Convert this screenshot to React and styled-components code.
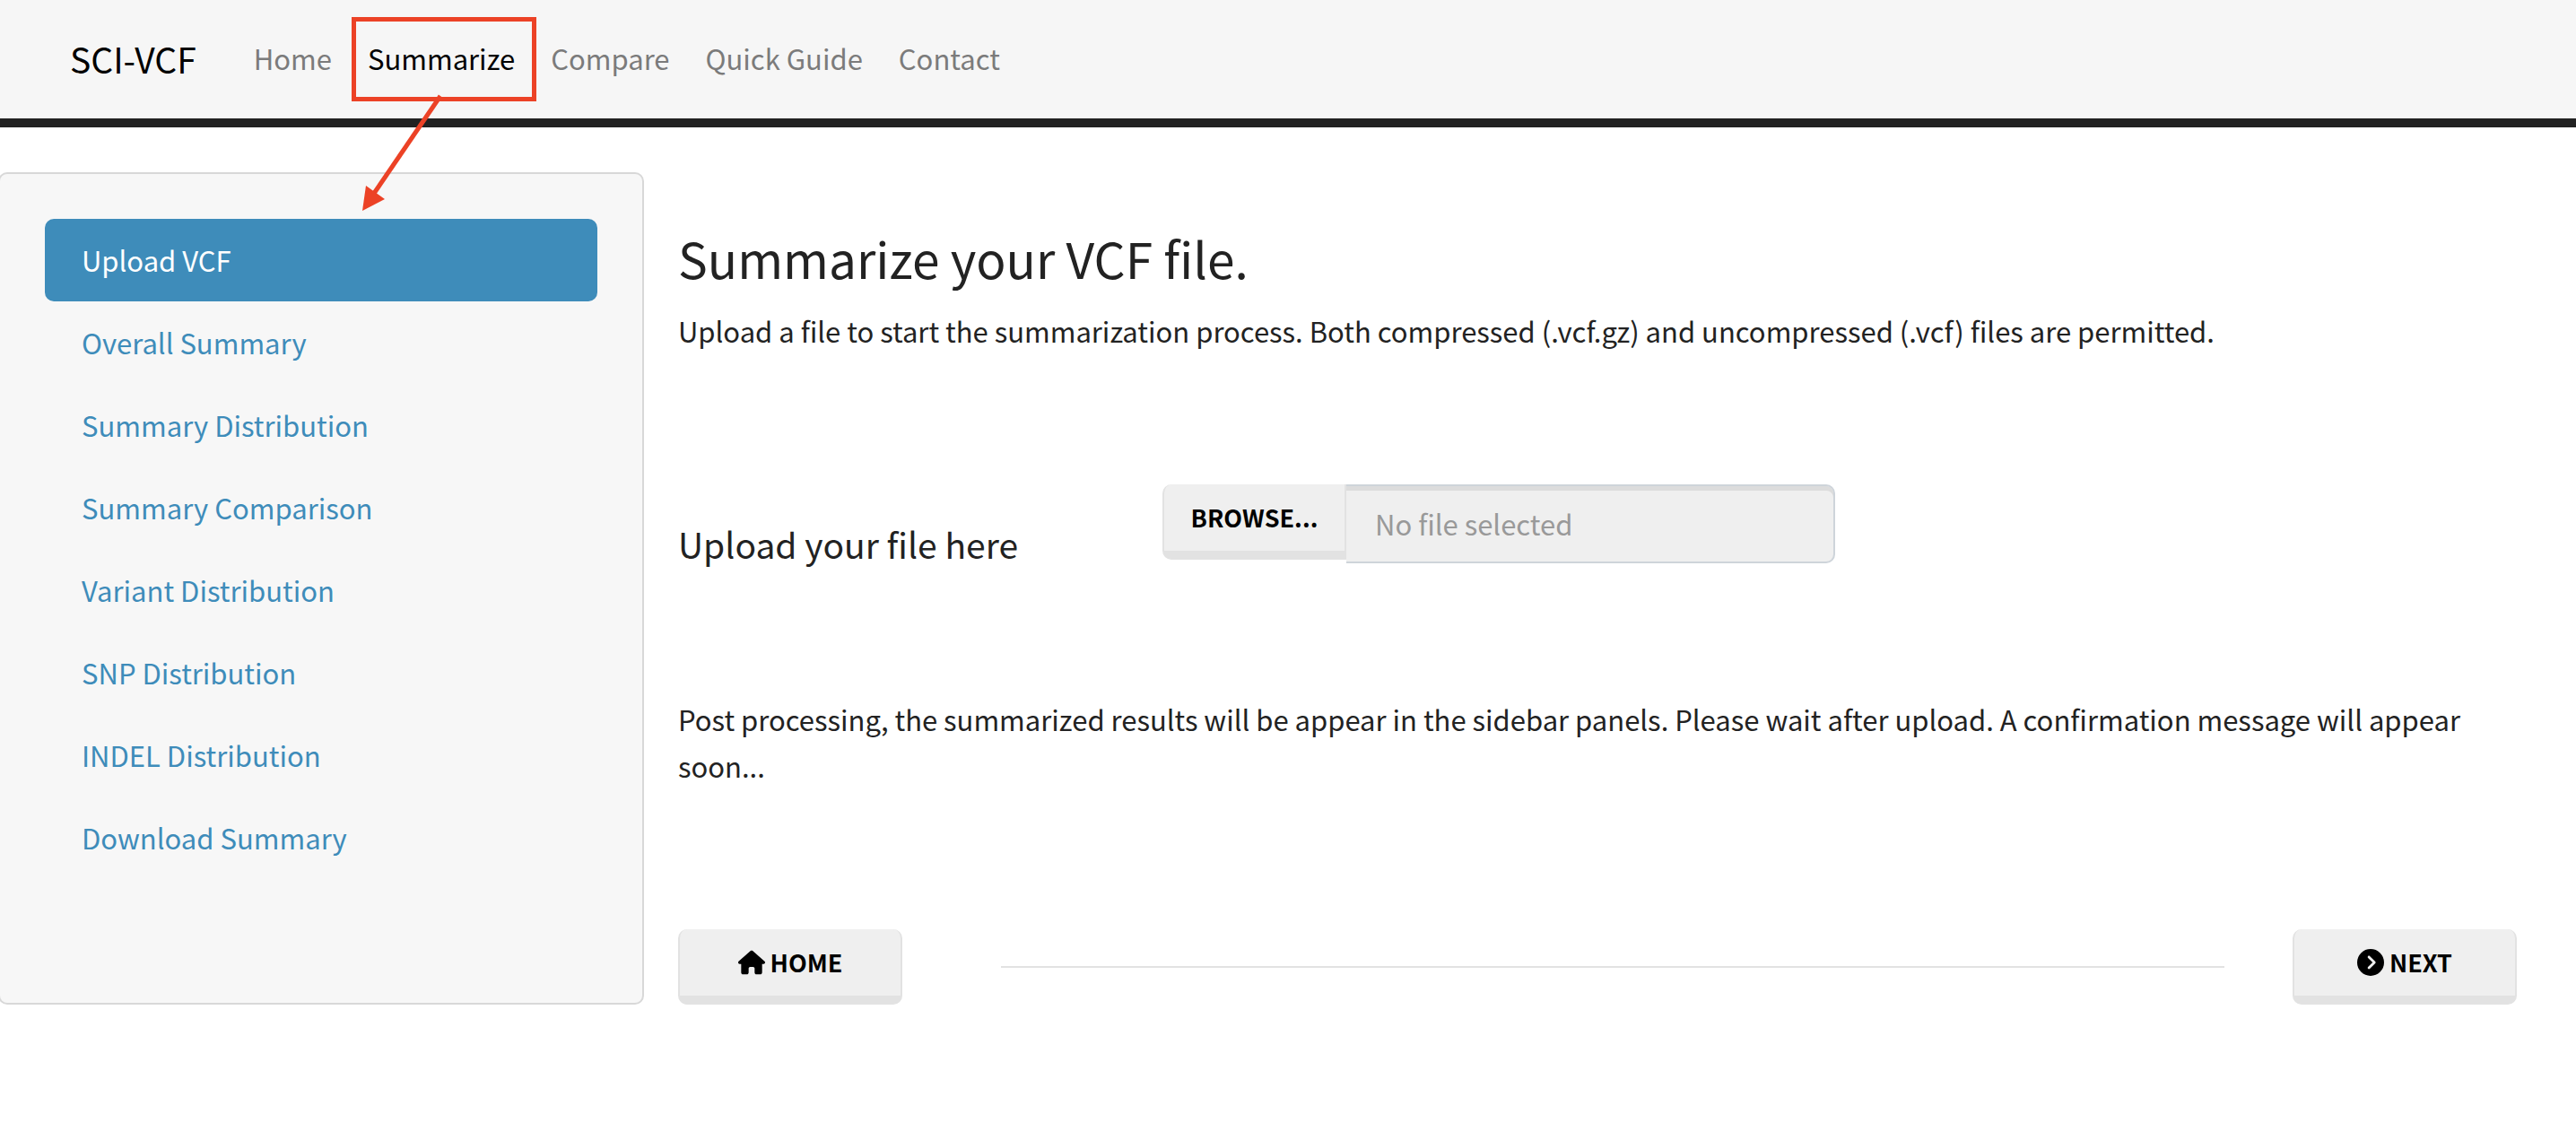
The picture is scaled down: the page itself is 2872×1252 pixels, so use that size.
import React, { useRef, useState } from "react";
import styled, { createGlobalStyle } from "styled-components";
import { FaHouse, FaCircleChevronRight } from "react-icons/fa6";

const GlobalStyle = createGlobalStyle`
  *, *::before, *::after { box-sizing: border-box; }
  body {
    margin: 0;
    background: #fff;
    color: #222;
    font-family: "Noto Sans CJK SC", "Noto Sans", sans-serif;
    font-size: 31px;
    line-height: 52px;
    overflow-x: hidden;
  }
`;

const Header = styled.header`
  display: flex;
  align-items: center;
  gap: 44px;
  min-height: 142px;
  padding: 0 78px 2px;
  background: #f6f6f6;
  border-bottom: 10px solid #222;
`;

const Brand = styled.a`
  color: #000;
  font-size: 39px;
  text-decoration: none;
`;

const NavList = styled.ul`
  display: flex;
  margin: 0;
  padding: 0;
  list-style: none;
`;

const NavItem = styled.li`
  position: relative;
`;

const NavLink = styled.a`
  display: block;
  padding: 20px;
  color: ${(p) => (p.$active ? "#000" : "#7b7b7b")};
  text-decoration: none;
`;

const Highlight = styled.span`
  position: absolute;
  inset: 0 -4px -2px 2px;
  border: 5px solid #ec4226;
  pointer-events: none;
`;

const Arrow = styled.svg`
  position: absolute;
  top: 84px;
  left: 12px;
  z-index: 1;
  pointer-events: none;
`;

const Layout = styled.div`
  display: grid;
  grid-template-columns: minmax(0, 180fr) minmax(0, 521fr);
  column-gap: 38px;
  margin: 50px 32px 50px -2px;
`;

const Sidebar = styled.nav`
  padding: 50px;
  background: #f7f7f7;
  border: 2px solid #d8d8d8;
  border-radius: 10px;
`;

const SideList = styled.ul`
  margin: 0;
  padding: 0;
  list-style: none;
`;

const SideLink = styled.a`
  display: block;
  padding: 20px 41px;
  border-radius: 10px;
  background: ${(p) => (p.$active ? "#3e8cba" : "transparent")};
  color: ${(p) => (p.$active ? "#fff" : "#3e8cba")};
  text-decoration: none;
`;

const Main = styled.main`
  padding-top: 55px;
`;

const Title = styled.h1`
  margin: 0 0 16px;
  font-size: 55px;
  font-weight: 400;
  line-height: 80px;
`;

const Text = styled.p`
  margin: 0;
`;

const Row = styled.div`
  display: grid;
  grid-template-columns: repeat(12, minmax(0, 1fr));
  column-gap: 76px;
  align-items: ${(p) => p.$align || "start"};
`;

const UploadRow = styled(Row)`
  margin: 145px 0 142px;
`;

const FieldLabel = styled.label`
  grid-column: span 3;
  padding-top: 38px;
  font-size: 39px;
  line-height: 56px;
`;

const FileGroup = styled.div`
  grid-column: span 6;
  display: flex;
  align-items: flex-start;
  max-width: 750px;
`;

const Button = styled.button`
  display: inline-flex;
  align-items: center;
  justify-content: center;
  gap: 6px;
  width: ${(p) => (p.$attached ? "205px" : "250px")};
  height: 84px;
  padding: 0;
  flex: none;
  background: #efefef;
  border: solid #e2e2e2;
  border-width: 0 2px 10px;
  border-radius: ${(p) => (p.$attached ? "10px 0 0 10px" : "10px")};
  color: #000;
  font: 700 27px/40px "Noto Sans CJK SC", "Noto Sans", sans-serif;
  text-transform: uppercase;
  cursor: pointer;

  svg {
    font-size: 30px;
  }
`;

const FileName = styled.input`
  flex: 1;
  min-width: 0;
  height: 88px;
  padding: 0 32px 2px;
  background: #efefef;
  border: 2px solid #ced4da;
  border-left: 0;
  border-radius: 0 10px 10px 0;
  box-shadow: inset 0 5px 0 #dcdcdc;
  color: #222;
  font: 400 31px/52px "Noto Sans CJK SC", "Noto Sans", sans-serif;

  &::placeholder {
    color: #999;
    opacity: 1;
  }
`;

const FooterRow = styled(Row)`
  margin-top: 156px;
`;

const Cell = styled.div`
  grid-column: span 2;
  display: flex;
`;

const Rule = styled.hr`
  grid-column: span 8;
  width: 100%;
  margin: 0;
  border: 0;
  border-top: 2px solid #e2e2e2;
`;

const navItems = ["Home", "Summarize", "Compare", "Quick Guide", "Contact"];

const sideItems = [
  "Upload VCF",
  "Overall Summary",
  "Summary Distribution",
  "Summary Comparison",
  "Variant Distribution",
  "SNP Distribution",
  "INDEL Distribution",
  "Download Summary",
];

export default function App() {
  const picker = useRef(null);
  const [fileName, setFileName] = useState("");

  return (
    <>
      <GlobalStyle />
      <Header>
        <Brand href="#">SCI-VCF</Brand>
        <nav>
          <NavList>
            {navItems.map((item) => (
              <NavItem key={item}>
                <NavLink href="#" $active={item === "Summarize"}>
                  {item}
                </NavLink>
                {item === "Summarize" && (
                  <>
                    <Highlight />
                    <Arrow width="96" height="136" viewBox="0 0 96 136" aria-hidden="true">
                      <path d="M89 4 14 114" fill="none" stroke="#ec4226" strokeWidth="5" />
                      <path d="M2 132 6 104 27 119Z" fill="#ec4226" />
                    </Arrow>
                  </>
                )}
              </NavItem>
            ))}
          </NavList>
        </nav>
      </Header>
      <Layout>
        <Sidebar>
          <SideList>
            {sideItems.map((item, i) => (
              <li key={item}>
                <SideLink href="#" $active={i === 0}>
                  {item}
                </SideLink>
              </li>
            ))}
          </SideList>
        </Sidebar>
        <Main>
          <Title>Summarize your VCF file.</Title>
          <Text>
            Upload a file to start the summarization process. Both compressed (.vcf.gz) and
            uncompressed (.vcf) files are permitted.
          </Text>
          <UploadRow>
            <FieldLabel htmlFor="vcf-file">Upload your file here</FieldLabel>
            <FileGroup>
              <Button type="button" $attached onClick={() => picker.current.click()}>
                Browse...
              </Button>
              <FileName
                id="vcf-file"
                type="text"
                readOnly
                placeholder="No file selected"
                value={fileName}
              />
              <input
                ref={picker}
                type="file"
                accept=".vcf,.gz"
                hidden
                onChange={(e) => setFileName(e.target.files[0]?.name || "")}
              />
            </FileGroup>
          </UploadRow>
          <Text>
            Post processing, the summarized results will be appear in the sidebar panels. Please
            wait after upload. A confirmation message will appear soon...
          </Text>
          <FooterRow $align="center">
            <Cell>
              <Button type="button">
                <FaHouse />
                Home
              </Button>
            </Cell>
            <Rule />
            <Cell>
              <Button type="button">
                <FaCircleChevronRight />
                Next
              </Button>
            </Cell>
          </FooterRow>
        </Main>
      </Layout>
    </>
  );
}
